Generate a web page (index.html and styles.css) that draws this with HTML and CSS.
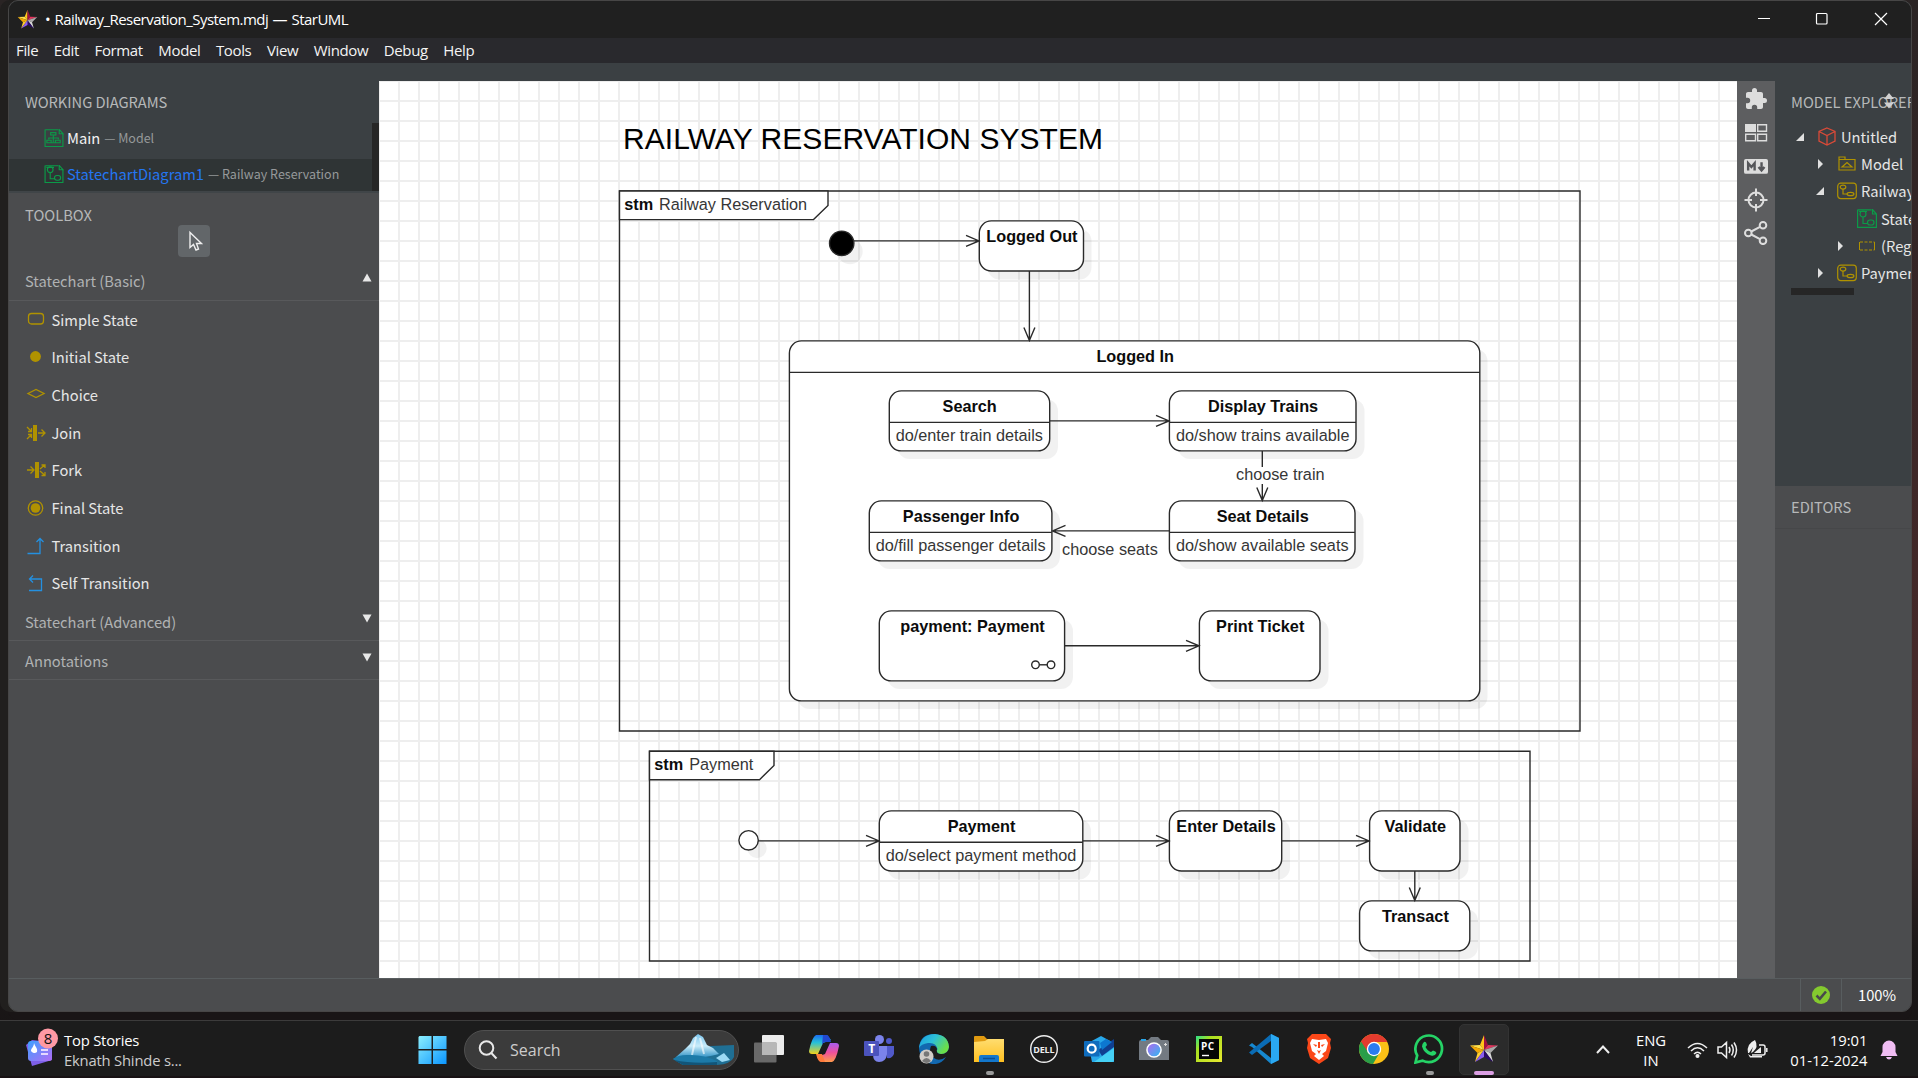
FILE: index.html
```html
<!DOCTYPE html>
<html lang="en">
<head>
<meta charset="utf-8">
<title>Railway_Reservation_System.mdj — StarUML</title>
<link rel="stylesheet" href="styles.css">
</head>
<body>
<svg class="defs" aria-hidden="true">
  <defs>
    <symbol id="star" viewBox="0 0 30 30">
      <path d="M15 1L15 16L11 11Z" fill="#ffc61a"/><path d="M15 1L19 11L15 16Z" fill="#a01240"/>
      <path d="M1 11.500L11 11L15 16Z" fill="#ffe04a"/><path d="M1 11.500L15 16L8.500 19Z" fill="#f5a800"/>
      <path d="M29 11.500L19 11L15 16Z" fill="#e0345c"/><path d="M29 11.500L15 16L21.500 19Z" fill="#a9a9a9"/>
      <path d="M24 28L21.500 19L15 16Z" fill="#d8d8d8"/><path d="M24 28L15 16V23Z" fill="#2a0a66"/>
      <path d="M6 28L8.500 19L15 16Z" fill="#ffcf30"/><path d="M6 28L15 16V23Z" fill="#8a5cf0"/>
    </symbol>
    <symbol id="sc" viewBox="0 0 20 20"><g fill="none" stroke="currentColor" stroke-width="1.2">
      <path d="M.6 .5V18.400H19.400V5M1 .8H14.500M15.500 .5V5H19.400Z"/><circle cx="6" cy="5" r="3"/><path d="M2 2.500H10M6 8V14.500H10.500"/><rect x="10.500" y="11" width="6.500" height="5" rx="2.500"/></g></symbol>
    <symbol id="cls" viewBox="0 0 20 20"><g fill="none" stroke="currentColor" stroke-width="1.2">
      <path d="M.6 .5V18.400H19.400V5M1 .8H14.500M15.500 .5V5H19.400Z"/><rect x="6.500" y="3.800" width="5.500" height="2.500"/><path d="M9.300 6.500V14M4.500 11V9.500H14.500V11"/><path d="M2.500 14.500V11.800H7V14.500ZM11.500 14.500V11.800H16.500V14.500ZM7 14.500H11.500"/></g></symbol>
    <symbol id="sm" viewBox="0 0 20 17"><g fill="none" stroke="currentColor" stroke-width="1.2">
      <rect x=".7" y=".7" width="18.600" height="15.400" rx="3"/><ellipse cx="6" cy="4.600" rx="2.800" ry="2"/><path d="M6 6.600V11.500H10"/><ellipse cx="13.500" cy="11.500" rx="3.400" ry="1.700"/></g></symbol>
    <linearGradient id="win" x1="0" y1="0" x2="1" y2="1"><stop offset="0" stop-color="#8cf0ff"/><stop offset="1" stop-color="#0a95ff"/></linearGradient>
    <linearGradient id="ber" x1="0" y1="0" x2="0" y2="1"><stop offset="0" stop-color="#7cc6ee"/><stop offset=".5" stop-color="#c9ecfa"/><stop offset="1" stop-color="#2b8fc4"/></linearGradient>
    <linearGradient id="news" x1="0" y1="0" x2="1" y2="1"><stop offset="0" stop-color="#3ea0ff"/><stop offset="1" stop-color="#b06cf5"/></linearGradient>
    <linearGradient id="cpa" x1="0" y1="0" x2="0" y2="1"><stop offset="0" stop-color="#1c6df0"/><stop offset=".4" stop-color="#26c0d8"/><stop offset="1" stop-color="#f2d21c"/></linearGradient>
    <linearGradient id="cpb" x1="0" y1="0" x2="0" y2="1"><stop offset="0" stop-color="#a85cf0"/><stop offset=".5" stop-color="#f0509c"/><stop offset="1" stop-color="#ff9a4a"/></linearGradient>
    <linearGradient id="edge" x1="0" y1="0" x2="1" y2=".5"><stop offset="0" stop-color="#1b9de0"/><stop offset=".5" stop-color="#2dc0d8"/><stop offset="1" stop-color="#6be048"/></linearGradient>
    <linearGradient id="fold" x1="0" y1="0" x2="0" y2="1"><stop offset="0" stop-color="#ffdd70"/><stop offset="1" stop-color="#ffc020"/></linearGradient>
    <linearGradient id="pc" x1="0" y1="0" x2="1" y2="1"><stop offset="0" stop-color="#2be08a"/><stop offset=".3" stop-color="#a8e020"/><stop offset="1" stop-color="#e8e830"/></linearGradient>
    <linearGradient id="lens" x1="0" y1="0" x2="1" y2="1"><stop offset="0" stop-color="#b06af0"/><stop offset="1" stop-color="#30b8f0"/></linearGradient>
  </defs>
</svg>

<div class="window">
  <header class="titlebar">
    <svg class="app-icon"><use href="#star"/></svg>
    <span class="title">• Railway_Reservation_System.mdj — StarUML</span>
    <svg class="controls" viewBox="0 0 130 14"><g fill="none" stroke="#fff" stroke-width="1.200"><path d="M0 6.500H12"/><rect x="58.500" y="1.500" width="10.500" height="10.500" rx="1"/><path d="M117 1L129 13M129 1L117 13"/></g></svg>
  </header>
  <nav class="menubar"><span>File</span><span>Edit</span><span>Format</span><span>Model</span><span>Tools</span><span>View</span><span>Window</span><span>Debug</span><span>Help</span></nav>

  <main class="workspace">
    <aside class="left">
      <section class="working">
        <h2>WORKING DIAGRAMS</h2>
        <div class="doc"><svg><use href="#cls"/></svg><span>Main</span><small>— Model</small></div>
        <div class="doc active"><svg><use href="#sc"/></svg><span>StatechartDiagram1</span><small>— Railway Reservation</small></div>
        <i class="scroll"></i>
      </section>
      <section class="toolbox">
        <h2>TOOLBOX</h2>
        <div class="pointer"><svg viewBox="0 0 32 32"><path d="M12 7.500V22.500L15.500 19.500L18 25L20.500 24L18.500 18.500H23.500Z" fill="none" stroke="#eee" stroke-width="1.400"/></svg></div>
        <div class="group"><span>Statechart (Basic)</span><svg viewBox="0 0 10 9"><path d="M5 .5L9.500 8.500H.5Z"/></svg></div>
        <ul class="tools">
          <li><svg viewBox="0 0 20 20"><rect x="2.500" y="3.500" width="15" height="10.500" rx="3" /></svg>Simple State</li>
          <li><svg viewBox="0 0 20 20"><circle cx="9.500" cy="9.500" r="5.400" fill="#b09200" stroke="none"/></svg>Initial State</li>
          <li><svg viewBox="0 0 20 20"><path d="M2 8.500L10 4.500L18 8.500L10 12.500Z"/></svg>Choice</li>
          <li><svg viewBox="0 0 20 20"><path d="M7 2H11V18H7Z" fill="#b09200" stroke="none"/><path d="M1 4L5 8M5.500 5V8.500H2M1 16L5 12M2 11.500H5.500V15M12 10H18.500M15.500 6.500L19 10L15.500 13.500"/></svg>Join</li>
          <li><svg viewBox="0 0 20 20"><path d="M9 2H13V18H9Z" fill="#b09200" stroke="none"/><path d="M1 10H7.500M4.500 6.500L8 10L4.500 13.500M14 9L18.500 5M15.500 5H19V8M14 11L18.500 15M15.500 15.500H19V12"/></svg>Fork</li>
          <li><svg viewBox="0 0 20 20"><circle cx="9.500" cy="10" r="7.200"/><circle cx="9.500" cy="10" r="4.800" fill="#b09200" stroke="none"/></svg>Final State</li>
          <li class="blue"><svg viewBox="0 0 20 20"><path d="M1.500 17.500H14V2.500M10.500 6L14 2.500L17.500 6"/></svg>Transition</li>
          <li class="blue"><svg viewBox="0 0 20 20"><path d="M3 17.500H15.500V6H3.500M7 2.500L3.500 6L7 9.500"/></svg>Self Transition</li>
        </ul>
        <div class="group low"><span>Statechart (Advanced)</span><svg viewBox="0 0 10 9"><path d="M5 8.500L9.500 .5H.5Z"/></svg></div>
        <div class="group low"><span>Annotations</span><svg viewBox="0 0 10 9"><path d="M5 8.500L9.500 .5H.5Z"/></svg></div>
      </section>
    </aside>

    <section class="canvas">
      <svg class="diagram" viewBox="379 81 1358 897">
        <g class="shadow">
          <circle cx="850" cy="251.500" r="12.700"/>
          <rect x="987.500" y="229" width="104" height="50.500" rx="12"/>
          <rect x="797.500" y="349" width="690" height="360" rx="12"/>
          <circle cx="757" cy="848.500" r="9.700"/>
          <rect x="887.500" y="819" width="203.500" height="60.500" rx="12"/>
          <rect x="1178" y="819" width="112" height="60.500" rx="12"/>
          <rect x="1378" y="819" width="90.500" height="60.500" rx="12"/>
          <rect x="1368" y="909" width="110" height="50" rx="12"/>
        </g>
        <g class="frame"><path d="M619.500 191H1580V731H619.500Z"/><path class="tab" d="M619.500 191H828V205.500L813.500 219.600H619.500Z"/>
          <path d="M649.500 751.200H1530V961H649.500Z"/><path class="tab" d="M649.500 751.200H774V765.500L759.500 779.700H649.500Z"/></g>
        <g class="state">
          <circle class="start" cx="841.700" cy="243.300" r="12.200"/>
          <rect x="979.300" y="220.900" width="104.200" height="50.100" rx="12"/>
          <rect x="789.400" y="340.900" width="690.400" height="360" rx="12"/><path d="M789.400 372.400H1479.800"/>
        </g>
        <g class="shadow">
          <rect x="897.500" y="399" width="160.500" height="60" rx="12"/>
          <rect x="1178" y="399" width="186.500" height="60" rx="12"/>
          <rect x="877.500" y="509" width="182.500" height="60" rx="12"/>
          <rect x="1178" y="509" width="185.500" height="60" rx="12"/>
          <rect x="887.500" y="619" width="185.500" height="70" rx="12"/>
          <rect x="1208" y="619" width="120.500" height="70" rx="12"/>
        </g>
        <g class="state">
          <rect x="889.300" y="390.900" width="160.400" height="60" rx="12"/><path d="M889.300 422.400H1049.700"/>
          <rect x="1169.400" y="390.900" width="186.600" height="60" rx="12"/><path d="M1169.400 422.400H1356"/>
          <rect x="869.300" y="500.900" width="182.600" height="60" rx="12"/><path d="M869.300 532.400H1051.900"/>
          <rect x="1169.400" y="500.900" width="185.600" height="60" rx="12"/><path d="M1169.400 532.400H1355"/>
          <rect x="879.300" y="610.900" width="185.300" height="70" rx="12"/>
          <rect x="1199.400" y="610.900" width="120.600" height="70" rx="12"/>
          <circle cx="1035.500" cy="664.800" r="3.800"/><circle cx="1051" cy="664.800" r="3.800"/><path d="M1039.500 664.800H1047"/>
          <circle cx="748.600" cy="840.300" r="9.700"/>
          <rect x="879.300" y="810.900" width="203.500" height="60.100" rx="12"/><path d="M879.300 842.300H1082.800"/>
          <rect x="1169.400" y="810.900" width="112.300" height="60.100" rx="12"/>
          <rect x="1369.600" y="810.900" width="90.400" height="60.100" rx="12"/>
          <rect x="1359.600" y="900.900" width="110.200" height="50" rx="12"/>
        </g>
        <g class="edge">
          <path d="M854 240.900H979M966 235.400L979 240.900L966 246.400"/>
          <path d="M1029.400 271V340.500M1023.900 327.500L1029.400 340.500L1034.900 327.500"/>
          <path d="M1050 420.900H1169M1156 415.400L1169 420.900L1156 426.400"/>
          <path d="M1262.300 451V467M1262.300 484V500.500M1256.800 487.500L1262.300 500.500L1267.800 487.500"/>
          <path d="M1169 530.900H1052.500M1065.500 525.400L1052.500 530.900L1065.500 536.400"/>
          <path d="M1064.500 645.800H1199M1186 640.300L1199 645.800L1186 651.300"/>
          <path d="M758 840.900H879M866 835.400L879 840.900L866 846.400"/>
          <path d="M1083 840.900H1169M1156 835.400L1169 840.900L1156 846.400"/>
          <path d="M1282 840.900H1369M1356 835.400L1369 840.900L1356 846.400"/>
          <path d="M1414.800 871V900.500M1409.300 887.500L1414.800 900.500L1420.300 887.500"/>
        </g>
        <text class="heading" x="623" y="149" textLength="480">RAILWAY RESERVATION SYSTEM</text>
        <g class="name">
          <text x="1031.900" y="242">Logged Out</text><text x="1135.200" y="362">Logged In</text>
          <text x="969.700" y="412">Search</text><text x="1263" y="412">Display Trains</text>
          <text x="961.100" y="522">Passenger Info</text><text x="1262.700" y="522">Seat Details</text>
          <text x="972.500" y="632">payment: Payment</text><text x="1260.200" y="632">Print Ticket</text>
          <text x="981.500" y="832">Payment</text><text x="1226" y="832">Enter Details</text>
          <text x="1415.300" y="832">Validate</text><text x="1415.400" y="922">Transact</text>
        </g>
        <g class="note">
          <text x="624.300" y="210" class="kw">stm</text><text x="659" y="210">Railway Reservation</text>
          <text x="654.300" y="770" class="kw">stm</text><text x="689.200" y="770">Payment</text>
          <text x="895.700" y="441">do/enter train details</text><text x="1176" y="441">do/show trains available</text>
          <text x="875.700" y="551">do/fill passenger details</text><text x="1176" y="551">do/show available seats</text>
          <text x="885.700" y="861">do/select payment method</text>
          <text x="1236" y="479.500">choose train</text><text x="1062" y="555">choose seats</text>
        </g>
      </svg>
    </section>

    <aside class="strip">
      <svg viewBox="0 0 24 24"><path fill="#ddd" d="M20.500 11H19V7c0-1.100-.9-2-2-2h-4V3.500a2.500 2.500 0 0 0-5 0V5H4c-1.100 0-2 .9-2 2v3.800h1.500a2.700 2.700 0 0 1 0 5.400H2V20c0 1.100.9 2 2 2h3.800v-1.500a2.700 2.700 0 0 1 5.400 0V22H17c1.100 0 2-.9 2-2v-4h1.500a2.500 2.500 0 0 0 0-5z"/></svg>
      <svg viewBox="0 0 24 24"><path fill="#ddd" d="M1 3H12V11H1Z"/><path fill="none" stroke="#ddd" stroke-width="1.400" d="M13.700 3.700H22.500V10.300H13.700ZM1.700 13.200H11.500V19.800H1.700ZM13.700 13.200H22.500V19.800H13.700Z"/></svg>
      <svg viewBox="0 0 26 24"><rect x="0" y="4.500" width="26" height="16" rx="2" fill="#ddd"/><path d="M4.500 17V9L8 13L11.500 9V17M19 8V15M15.800 13L19 16.800L22.200 13" fill="none" stroke="#55565a" stroke-width="2.600"/></svg>
      <svg viewBox="0 0 24 24"><g fill="none" stroke="#ddd" stroke-width="2"><circle cx="12" cy="12" r="7.500"/><path d="M12 .5V8M12 16V23.500M.5 12H8M16 12H23.500"/></g></svg>
      <svg viewBox="0 0 24 24"><g fill="none" stroke="#ddd" stroke-width="2"><circle cx="4.300" cy="12" r="3.300"/><circle cx="19" cy="4.300" r="3.300"/><circle cx="19" cy="19.800" r="3.300"/><path d="M7.300 10.500L16 5.800M7.300 13.500L16 18.200"/></g></svg>
    </aside>

    <aside class="right">
      <section class="explorer">
        <h2>MODEL EXPLORER</h2><svg class="sort" viewBox="0 0 12 16"><path d="M6 0L11 6H1ZM6 15.500L11 9.500H1Z"/></svg>
        <div class="node"><svg class="tw" viewBox="0 0 10 10"><path d="M9 1V9H1Z"/></svg><svg viewBox="0 0 20 20" class="red"><path d="M10 1L18 4.500V14L10 18L2 14V4.500ZM2 4.500L10 8.500L18 4.500M10 8.500V18" fill="none" stroke="currentColor" stroke-width="1.300"/></svg>Untitled</div>
        <div class="node d1"><svg class="tw" viewBox="0 0 10 10"><path d="M3 0L8 5L3 10Z"/></svg><svg viewBox="0 0 20 20"><path d="M2 16V3H8V5.500H18V16ZM2 5.500H8M5 13H15L10 8.500Z" fill="none" stroke="currentColor" stroke-width="1.200"/></svg>Model</div>
        <div class="node d1"><svg class="tw" viewBox="0 0 10 10"><path d="M9 1V9H1Z"/></svg><svg><use href="#sm"/></svg>Railway Reservation</div>
        <div class="node d2 leaf"><svg class="green"><use href="#sc"/></svg>StatechartDiagram1</div>
        <div class="node d2"><svg class="tw" viewBox="0 0 10 10"><path d="M3 0L8 5L3 10Z"/></svg><svg viewBox="0 0 20 20"><path d="M2.500 6V14M17.500 6V14" stroke="currentColor"/><path d="M3 6H17.500M3 14H17.500" stroke="currentColor" stroke-dasharray="3 1.500"/></svg>(Region)</div>
        <div class="node d1"><svg class="tw" viewBox="0 0 10 10"><path d="M3 0L8 5L3 10Z"/></svg><svg><use href="#sm"/></svg>Payment</div>
        <i class="hscroll"></i>
      </section>
      <section class="editors"><h2>EDITORS</h2></section>
    </aside>
  </main>
  <footer class="status"><span class="ok"><svg viewBox="0 0 18 18"><circle cx="9" cy="9" r="9" fill="#84c92f"/><path d="M4.500 9.500L7.800 12.800L14 5.500" fill="none" stroke="#48494b" stroke-width="2.600"/></svg></span><span class="zoom">100%</span></footer>
</div>

<div class="taskbar">
  <div class="widget">
    <svg viewBox="0 0 36 42"><path d="M2 17L8 12L26 14L28 32L8 38Z" fill="#7e5fe8"/><rect x="4" y="13" width="24" height="20" rx="3" fill="url(#news)"/><path d="M10 15c1 4 4 5 3 9a4 4 0 0 1-6-1c0-3 3-4 3-8z" fill="#fff"/><path d="M17 22H24M17 26H24" stroke="#e6d9ff" stroke-width="2"/><circle cx="24" cy="10.500" r="10" fill="#ff99a4"/><text x="24" y="15.500" text-anchor="middle" class="badge">8</text></svg>
    <div><b>Top Stories</b><span>Eknath Shinde s...</span></div>
  </div>
  <svg class="start-btn" viewBox="0 0 30 30"><path fill="url(#win)" d="M1.500 .5H14V14H.5V1.500ZM15.500 .5H29.500V14H15.500ZM.5 15.500H14V29.500H.5ZM15.500 15.500H29.500V29.500H15.500Z"/></svg>
  <div class="search">
    <svg class="lens" viewBox="0 0 20 20"><circle cx="8.500" cy="8" r="6.800"/><path d="M13.300 13L18.500 18.500"/></svg><span>Search</span>
    <svg class="berg" viewBox="0 0 62 32"><path d="M38 12L61 11V23Q58 30 44 31H10L0 25L8 20Z" fill="#1f6f94"/><path d="M3 23L12 15L17 10L20 4L25 0L30 3L34 11L40 14L46 20Q24 26 3 23Z" fill="url(#ber)"/><path d="M23 3L19 21M27 4L31 20" stroke="#fff" stroke-width="2" opacity=".6"/><path d="M43 24L51 19L57 26L49 28Z" fill="#9bdaf5"/><path d="M0 25Q5 21 14 21Q30 20 44 27V31H10Z" fill="#1c7aa8"/><path d="M1 26Q20 30 44 28V31H10Z" fill="#125578"/></svg>
  </div>
  <div class="apps">
    <span><svg viewBox="0 0 30 30"><rect x="8" y="1" width="22" height="20" rx="1" fill="#ececec"/><rect x="0" y="8.500" width="22.500" height="20" rx="1" fill="#777" opacity=".85"/><rect x="8" y="8.500" width="14.500" height="12.500" fill="#b8b8b8"/></svg></span>
    <span><svg viewBox="0 0 30 30"><path d="M7 1H18L22 6L14 9L9 20H3Q0 20 0 17Q3 3 7 1Z" fill="url(#cpa)"/><path d="M14 1H18Q20 1 22 8H17Q14 8 13 11Z" fill="#2148d0"/><path d="M23 28H12L8 23L16 20L21 9H27Q30 9 30 12Q27 27 23 28Z" fill="url(#cpb)"/><path d="M7 20H13L16 28H12Q9 28 7 20Z" fill="#ff7a3c"/></svg></span>
    <span><svg viewBox="0 0 30 30"><circle cx="15.500" cy="5.500" r="4.500" fill="#7b83eb"/><circle cx="25" cy="7" r="3" fill="#5059c9"/><path d="M20 12H30V20Q28 25 23 24Z" fill="#5059c9"/><path d="M9 12H23V20Q22 28 15 28Q9 28 9 20Z" fill="#7b83eb"/><rect x="0" y="7" width="15" height="15" rx="1" fill="#4b53bc"/><text x="7.500" y="19" text-anchor="middle" class="glyph">T</text></svg></span>
    <span><svg viewBox="0 0 30 30"><path d="M0 14Q1 0 15 0Q29 1 30 13Q29 20 22 20Q17 20 18 15Q17 11 12 12Q9 19 15 24Q20 28 27 23Q22 31 13 30Q1 28 0 14Z" fill="#1268b0"/><path d="M0 14Q2 0 16 0Q29 1 30 13Q29 20 22 20Q16 19 18.500 15Q17 8 9 9Q2 10 0 14Z" fill="url(#edge)"/><circle cx="7.500" cy="22.500" r="7" fill="#d0ccc8"/><circle cx="7.500" cy="20" r="2.800" fill="#777"/><path d="M3 27Q7.500 21 12 27Q7.500 31 3 27Z" fill="#777"/></svg></span>
    <span><svg viewBox="0 0 30 30"><path d="M0 8V3Q0 2 1 2H10L13 5H20V8Z" fill="#e09a10"/><path d="M0 8L11 7L14 5H30V28H0Z" fill="url(#fold)"/><path d="M5 28V23Q5 21 7 21H23Q25 21 25 23V28Z" fill="#1377cc"/><path d="M9 24.500H21" stroke="#0a4f94" stroke-width="1.500"/></svg><i></i></span>
    <span><svg viewBox="0 0 30 30"><circle cx="15" cy="15" r="13.300" fill="none" stroke="#eee" stroke-width="1.400"/><text x="14.800" y="18.500" text-anchor="middle" class="dell" textLength="21" lengthAdjust="spacingAndGlyphs">DELL</text></svg></span>
    <span><svg viewBox="0 0 30 30"><path d="M4 9L17 2L30 9V28H8Z" fill="#28a8ea"/><path d="M14 16L30 5V13L18 22Z" fill="#103f91"/><path d="M10 28L30 14V26Q30 28 28 28Z" fill="#45d0f5"/><path d="M16 9L22 5L28 8L18 16Z" fill="#0d78d0"/><rect x="0" y="7" width="15.500" height="15.500" rx="1" fill="#0f6cbd"/><circle cx="7.700" cy="14.700" r="4" fill="none" stroke="#fff" stroke-width="2.200"/></svg></span>
    <span><svg viewBox="0 0 30 30"><path d="M0 8Q0 6 2 6H9L12 3H19L22 6H28Q30 6 30 8V26H0Z" fill="#737a82"/><rect x="2" y="5" width="5" height="2" fill="#2aa5e8"/><circle cx="15" cy="16" r="7.800" fill="#fff"/><circle cx="15" cy="16" r="6.300" fill="url(#lens)"/><path d="M26.500 9V12M25 10.500H28" stroke="#ddd"/></svg></span>
    <span><svg viewBox="0 0 30 30"><rect x="2" y="2" width="26" height="26" fill="url(#pc)"/><rect x="5" y="5" width="20" height="20" fill="#050805"/><text x="7" y="15.500" class="pct" textLength="13">PC</text><path d="M8 21.500H15" stroke="#fff" stroke-width="1.400"/></svg></span>
    <span><svg viewBox="0 0 30 30"><path d="M22 0L30 4V26L22 30L3 13L0 11.500L3 9L22 24Z" fill="#1688d0"/><path d="M22 0V7L3 21L0 18.500Z" fill="#0a6cb5"/><path d="M22 0L30 4V26L22 30Z" fill="#2aa8f2"/></svg></span>
    <span><svg viewBox="0 0 30 30"><path d="M8 0H22L27 5L26 9L27 14L24 24L15 30L6 24L3 14L4 9L3 5Z" fill="#fb4718"/><path d="M8 5L15 6L22 5L24 9L22 17L18 20L20 22L15 26L10 22L12 20L8 17L6 9Z" fill="#fff"/><path d="M9 10L13 11L12 13ZM21 10L17 11L18 13ZM13 16L15 20L17 16L15 17ZM14 8H16V14H14Z" fill="#fb4718"/></svg></span>
    <span><svg viewBox="0 0 30 30"><circle cx="15" cy="15" r="15" fill="#fbc116"/><path d="M15 15L2 7.500A15 15 0 0 0 14 30L21 18Z" fill="#2a9e48"/><path d="M2 7.500A15 15 0 0 1 28.300 8H15L9 18Z" fill="#e33b2e"/><circle cx="15" cy="15" r="7.200" fill="#fff"/><circle cx="15" cy="15" r="5.900" fill="#2b7cf0"/></svg></span>
    <span><svg viewBox="0 0 30 30"><path d="M1.500 28.500L3.200 21.500A13.300 13.300 0 1 1 8.500 26.600Z" fill="none" stroke="#25d366" stroke-width="2.700"/><path d="M10 8Q12 7 13 11L11.500 13Q13.500 17 17 18L19 16.500Q22 17 22.500 19Q21 22.500 17 21.500Q10 19.500 8 12.500Q8 9.500 10 8Z" fill="#25d366"/></svg><i></i></span>
    <span class="current"><svg viewBox="0 0 30 30"><use href="#star"/></svg><i></i></span>
  </div>
  <svg class="chev" viewBox="0 0 14 9"><path d="M1 8L7 1.500L13 8"/></svg>
  <div class="lang">ENG<br>IN</div>
  <svg class="tray" viewBox="0 0 82 20"><g fill="none" stroke="#eee" stroke-width="1.500"><path d="M1 8Q10.500 -1 20 8M4 11Q10.500 4.500 17 11M7 14Q10.500 10.500 14 14"/><circle cx="10.500" cy="16" r="1.300" fill="#eee"/><path d="M31 7H34.500L39.500 2.500V17.500L34.500 13H31ZM42 7Q44 10 42 13M44.500 4.500Q48 10 44.500 15.500M47 2.500Q52 10 47 17.500"/><path d="M72 5H76Q78 5 78 7V13Q78 15 76 15H65M79.800 8V12"/></g><path d="M61 13Q59 4 68 0Q72 7 66 12L64 13L66 7L62 13ZM68 12L74 7V13H67ZM61 14L64 16H75V17.500H63Z" fill="#eee"/></svg>
  <div class="clock">19:01<br>01-12-2024</div>
  <svg class="bell" viewBox="0 0 18 20"><path d="M9 .5A6.500 6.500 0 0 1 15.500 7V12L17.500 16H.5L2.500 12V7A6.500 6.500 0 0 1 9 .5ZM6 17H12Q11 19.500 9 19.500Q7 19.500 6 17Z" fill="#f0bdf3"/></svg>
</div>
</body>
</html>
```
FILE: styles.css
```css
* { box-sizing: border-box; }
body {
  margin: 0; width: 1918px; height: 1078px; overflow: hidden;
  display: flex; flex-direction: column; justify-content: space-between;
  background: linear-gradient(180deg, #2a2424 0, #3a2626 35%, #482a2a 70%, #1b1818 88%, #171314 100%);
  font-family: "Open Sans", "Noto Sans", sans-serif; color: #fff;
}
.defs { position: absolute; width: 0; height: 0; }
svg { display: block; flex: none; }

.window {
  width: 1904px; height: 1012px; margin: 0 0 0 8px;
  display: flex; flex-direction: column; overflow: hidden;
  border: 1px solid #474646; border-radius: 10px; background: #3b4043;
  box-shadow: -8px 0 0 #211f1e, 0 8px 0 #191516;
}
.titlebar { height: 37px; flex: none; display: flex; align-items: center; padding: 0 25px 0 8px; background: #202020; }
.app-icon { width: 21px; height: 21px; margin-top: -1px; }
.title { margin-left: 7px; padding-bottom: 2px; font-size: 15px; letter-spacing: -.53px; word-spacing: 1px; }
.controls { width: 130px; height: 14px; margin: -1px -2px 0 auto; }
.menubar { height: 25px; flex: none; display: flex; align-items: center; gap: 15.500px; padding: 0 0 2px 7px; background: #29292d; font-size: 15px; letter-spacing: -.36px; color: #f4f4f4; }

.workspace { flex: 1; display: flex; min-height: 0; font: 14.700px/20px "Noto Sans CJK SC", sans-serif; color: #e6e6e6; }
h2 { margin: 0; font: inherit; color: #b6b8b9; white-space: nowrap; }
.left { width: 370px; flex: none; display: flex; flex-direction: column; }
.working { height: 130px; flex: none; padding-top: 29px; position: relative; border-bottom: 2px solid #404548; }
.working h2 { padding-left: 16px; height: 31px; letter-spacing: -.05px; }
.doc { height: 32px; margin-bottom: 4px; padding: 0 0 2px 35px; display: flex; align-items: center; color: #f2f2f2; }
.doc svg { width: 20px; height: 19px; margin-right: 3px; color: #0b9a48; }
.doc small { font-size: 12.500px; margin-left: 4px; color: #96999a; }
.doc.active { background: #2f3435; color: #2476f2; }
.scroll { position: absolute; right: 0; top: 60px; width: 7px; height: 68px; background: #262626; }
.toolbox { flex: 1; background: #4b4c4e; }
.toolbox h2 { padding: 12px 0 0 16px; height: 32px; }
.pointer { width: 32px; height: 32px; margin: 0 0 5px 169px; border-radius: 4px; background: #626669; }
.group { height: 39px; display: flex; justify-content: space-between; padding: 9px 7px 0 16px; border-bottom: 1px solid #58595b; color: #b0b2b3; }
.group svg { width: 10px; height: 9px; margin-top: 2px; fill: #e8e8e8; }
.low { padding-top: 10px; }
.tools { list-style: none; margin: 0; padding: 0 0 0 16px; }
.tools li { height: 37.650px; display: flex; align-items: center; gap: 6px; }
.tools svg { width: 20px; height: 20px; margin-left: .5px; fill: none; stroke: #b09200; stroke-width: 1.300; }
.tools .blue svg { stroke: #2490e0; }

.canvas {
  width: 1358px; height: 897px; margin-top: 18px; flex: none; background-color: #fff;
  background-image: linear-gradient(90deg, #eee 1px, transparent 1px 19px, #eee 19px), linear-gradient(#eee 1px, transparent 1px 19px, #eee 19px);
  background-size: 20px 20px;
}
.diagram { width: 1358px; height: 897px; font-family: "Liberation Sans", Arial, sans-serif; font-size: 16.250px; }
.shadow { fill: #000; fill-opacity: .055; }
.state, .frame, .edge { fill: none; stroke: #2a2a2a; stroke-width: 1.400; }
.state rect, .state circle, .frame .tab { fill: #fff; }
.state .start { fill: #000; }
.heading { font-size: 30px; fill: #000; }
.name { font-weight: bold; text-anchor: middle; fill: #0c0c0c; }
.note { fill: #363636; }
.kw { font-weight: bold; fill: #0c0c0c; }

.strip { width: 38px; margin-top: 18px; height: 897px; flex: none; background: #5d5e60; padding-top: 6px; display: flex; flex-direction: column; align-items: center; gap: 9.500px; }
.strip svg { width: 24px; height: 24px; }
.right { flex: 1; min-width: 0; overflow: hidden; display: flex; flex-direction: column; }
.explorer { height: 423px; flex: none; padding: 29px 0 0 16px; position: relative; overflow: hidden; }
.explorer h2 { height: 31px; }
.sort { position: absolute; left: 108px; top: 30px; width: 12px; height: 16px; fill: #d0d0d0; }
.node { height: 27.350px; display: flex; align-items: center; white-space: nowrap; padding-left: 4px; }
.node svg { width: 20px; height: 20px; margin-right: 4px; color: #b09200; }
.node .tw { width: 10px; height: 10px; margin-right: 12px; fill: #e0e0e0; }
.node .green { color: #0b9a48; }
.node .red { color: #d94a38; }
.d1 { padding-left: 24px; }
.d2 { padding-left: 44px; }
.leaf { padding-left: 66px; }
.hscroll { display: block; width: 63px; height: 7px; margin-top: 1px; background: #262626; }
.editors { flex: 1; background: linear-gradient(#464749, #464749) 0 42px / 100% 1px no-repeat #4b4c4e; padding: 11px 0 0 16px; }
.status { height: 33px; flex: none; display: flex; justify-content: flex-end; background: #4b4c4e; border-top: 1px solid #585d5f; font: 14.700px/32px "Noto Sans CJK SC", sans-serif; }
.status span { border-left: 1px solid #585d5f; }
.ok { width: 41px; padding: 7px 0 0 11px; }
.ok svg { width: 18px; height: 18px; }
.zoom { width: 70px; padding-left: 16px; }

.taskbar { height: 58px; display: flex; align-items: center; background: #1c1c1c; border-top: 1px solid #3c3b3b; border-bottom: 2px solid #181214; padding-top: 2px; font-size: 14.800px; line-height: 20px; letter-spacing: -.2px; }
.widget { width: 418px; flex: none; display: flex; padding-left: 24px; }
.widget svg { width: 36px; height: 42px; margin: -2px 4px 0 0; }
.widget b, .widget span { display: block; font-weight: normal; }
.widget span { color: #ccc; }
.badge { font: 15px "Open Sans", sans-serif; fill: #111; }
.start-btn { width: 29px; height: 30px; }
.search { width: 275px; height: 40px; margin-left: 17px; flex: none; border-radius: 20px; background: #3b3b3b; border: 1px solid #505050; display: flex; align-items: center; font-size: 16px; letter-spacing: 0; color: #ccc; }
.lens { width: 20px; height: 20px; margin: 0 12px 0 13px; fill: none; stroke: #e8e8e8; stroke-width: 2; }
.berg { width: 62px; height: 32px; margin: 0 3px 0 auto; }
.apps { display: flex; margin-left: 2.500px; height: 53px; }
.apps span { width: 55px; position: relative; padding: 11px 0 0 12.500px; }
.apps svg { width: 30px; height: 30px; }
.apps i { position: absolute; left: 24px; bottom: 1px; width: 8px; height: 4px; border-radius: 2px; background: #9a9a9a; }
.apps .current { width: 50px; margin: 1px 2.500px; padding: 9px 0 0 9px; border-radius: 5px; background: #2b2b2b; border: 1px solid #333; }
.apps .current i { left: 14px; bottom: -1px; width: 20px; background: #dc9fe4; }
.glyph { font: bold 12px "Open Sans", sans-serif; fill: #fff; }
.dell { font: bold 9px "Open Sans", sans-serif; fill: #eee; }
.pct { font: bold 10px "Open Sans", sans-serif; fill: #fff; }
.chev { width: 14px; height: 9px; margin-left: 84.500px; fill: none; stroke: #eee; stroke-width: 2; }
.lang { width: 34px; margin-left: 24px; text-align: center; letter-spacing: 0; }
.tray { width: 82px; height: 20px; margin-left: 19px; }
.clock { width: 84px; margin-left: 14.500px; text-align: right; letter-spacing: 0; }
.bell { width: 18px; height: 20px; margin-left: 12px; }
```
